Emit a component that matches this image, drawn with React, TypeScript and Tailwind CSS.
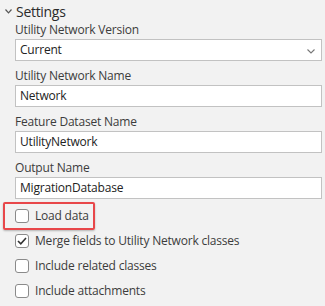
import React from "react";

const font = { fontFamily: '"Open Sans", "Noto Sans", sans-serif' };

function Field({ label, value, select }: { label: string; value: string; select?: boolean }) {
  return (
    <div className="flex flex-col">
      <div className="text-[12px] leading-[15px] tracking-[-0.2px] text-[#3c3c3c] mb-[2px]">{label}</div>
      <div className="h-[22px] bg-white border border-[#c2c2c2] flex items-center justify-between pl-[4px] pr-[6px] text-[12px] tracking-[-0.2px] text-[#222]">
        <span>{value}</span>
        {select && (
          <svg width="8" height="5" viewBox="0 0 8 5" className="mt-[2px]">
            <path d="M0.5 0.5 L4 4 L7.5 0.5" fill="none" stroke="#777" strokeWidth="1.1" />
          </svg>
        )}
      </div>
    </div>
  );
}

function Check({ label, checked }: { label: string; checked?: boolean }) {
  return (
    <div className="flex items-center gap-[6px] h-[14px]">
      <div className="w-[14px] h-[14px] rounded-[3px] border border-[#8a8a8a] bg-white flex items-center justify-center">
        {checked && (
          <svg width="10" height="8" viewBox="0 0 10 8">
            <path d="M1 4 L3.8 6.8 L9 1" fill="none" stroke="#333" strokeWidth="1.6" />
          </svg>
        )}
      </div>
      <span className="text-[12px] tracking-[-0.2px] text-[#3c3c3c]">{label}</span>
    </div>
  );
}

export default function App() {
  return (
    <div className="w-[325px] h-[306px] bg-[#f2f2f2] overflow-hidden" style={font}>
      <div className="flex items-center h-[22px] pl-[5px]">
        <svg width="7" height="5" viewBox="0 0 7 5" className="mr-[4px]">
          <path d="M0.5 0.5 L3.5 3.8 L6.5 0.5" fill="none" stroke="#555" strokeWidth="1.2" />
        </svg>
        <span className="text-[14px] tracking-[-0.3px] text-[#2b2b2b]">Settings</span>
      </div>
      <div className="pl-[15px] pr-[3px] flex flex-col gap-[7px]">
        <Field label="Utility Network Version" value="Current" select />
        <Field label="Utility Network Name" value="Network" />
        <Field label="Feature Dataset Name" value="UtilityNetwork" />
        <Field label="Output Name" value="MigrationDatabase" />
      </div>
      <div className="flex flex-col gap-[11px] pl-[15px] mt-[10px]">
        <div className="relative">
          <div className="absolute left-[-12px] top-[-7px] w-[92px] h-[28px] border-2 border-[#e8474a] rounded-[2px] shadow-[0_1px_2px_rgba(0,0,0,0.25)]" />
          <Check label="Load data" />
        </div>
        <Check label="Merge fields to Utility Network classes" checked />
        <Check label="Include related classes" />
        <Check label="Include attachments" />
      </div>
    </div>
  );
}
